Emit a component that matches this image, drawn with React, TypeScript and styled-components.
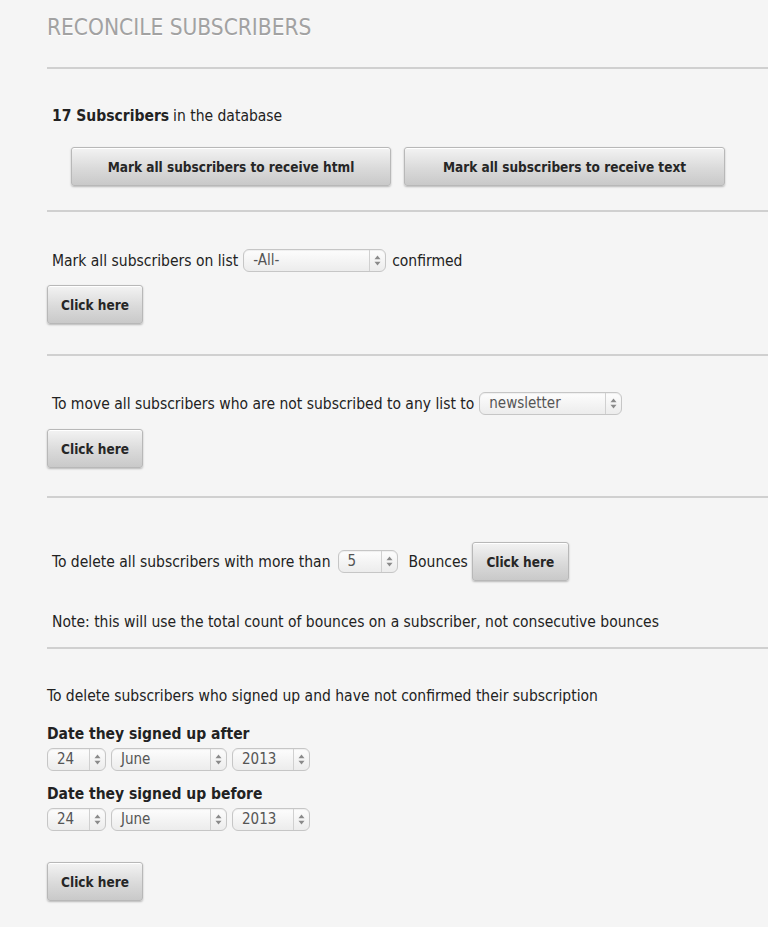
import React from "react";
import styled, { createGlobalStyle } from "styled-components";

const GlobalStyle = createGlobalStyle`
  body {
    margin: 0;
    background: #f5f5f5;
    font-family: "DejaVu Sans Condensed", "DejaVu Sans", sans-serif;
    color: #222;
  }
`;

const Page = styled.div`
  padding-left: 47px;
  min-height: 927px;
`;

const Title = styled.h1`
  margin: 0;
  padding: 14px 0 0;
  height: 69px;
  box-sizing: border-box;
  font-size: 22.5px;
  font-weight: normal;
  line-height: 26px;
  color: #a2a2a2;
  text-shadow: 0 1px 0 #fff;
  border-bottom: 2px solid #d0d0d0;
`;

const Section = styled.div<{ $top: number; $bottom: number }>`
  padding: ${(p) => p.$top}px 0 ${(p) => p.$bottom}px;
  border-bottom: ${(p) => (p.$bottom > 0 ? "2px solid #d0d0d0" : "none")};
`;

const Line = styled.div<{ $indent?: number; $gap?: number }>`
  display: flex;
  align-items: center;
  min-height: 20px;
  padding-left: ${(p) => p.$indent ?? 5}px;
  margin-top: ${(p) => p.$gap ?? 0}px;
  font-size: 15.5px;
  line-height: 20px;
  white-space: nowrap;
`;

const Strong = styled.b`
  font-weight: bold;
  margin-right: 4px;
`;

const Label = styled.div<{ $gap: number }>`
  margin-top: ${(p) => p.$gap}px;
  font-size: 15.5px;
  font-weight: bold;
  line-height: 20px;
`;

const ButtonRow = styled.div`
  display: flex;
  gap: 13px;
  margin-top: 21px;
  padding-left: 24px;
`;

const Button = styled.button<{ $width: number; $gap?: number; $left?: number }>`
  display: block;
  width: ${(p) => p.$width}px;
  height: 39px;
  margin-top: ${(p) => p.$gap ?? 0}px;
  margin-left: ${(p) => p.$left ?? 0}px;
  padding: 0;
  border: 1px solid #b8b8b8;
  border-radius: 3px;
  background: linear-gradient(#f3f3f3, #dadada 55%, #c9c9c9);
  box-shadow: 0 1px 2px rgba(0, 0, 0, 0.25), inset 0 1px 0 #fff;
  font-family: "DejaVu Sans Condensed", "DejaVu Sans", sans-serif;
  font-size: 13.5px;
  font-weight: bold;
  color: #262626;
  cursor: pointer;
`;

const Select = styled.div<{ $width: number; $left?: number; $right?: number }>`
  display: inline-flex;
  box-sizing: border-box;
  width: ${(p) => p.$width}px;
  height: 23px;
  margin-left: ${(p) => p.$left ?? 0}px;
  margin-right: ${(p) => p.$right ?? 0}px;
  border: 1px solid #c6c6c6;
  border-radius: 6px;
  background: linear-gradient(#fdfdfd, #ececec);
  box-shadow: inset 0 1px 1px rgba(0, 0, 0, 0.06);
  font-size: 15px;
  color: #555;
`;

const SelectValue = styled.span`
  flex: 1;
  padding-left: 9px;
  line-height: 21px;
  overflow: hidden;
`;

const SelectArrows = styled.span`
  display: flex;
  align-items: center;
  justify-content: center;
  width: 15px;
  border-left: 1px solid #d0d0d0;
`;

const DateRow = styled.div`
  display: flex;
  gap: 5px;
  margin-top: 4px;
`;

const Arrows = () => (
  <SelectArrows>
    <svg width="7" height="11" viewBox="0 0 7 11">
      <path d="M3.5 0.5 L6.5 4.3 L0.5 4.3 Z" fill="#8a8a8a" />
      <path d="M3.5 10.5 L6.5 6.7 L0.5 6.7 Z" fill="#8a8a8a" />
    </svg>
  </SelectArrows>
);

const FakeSelect = ({
  value,
  width,
  left,
  right,
}: {
  value: string;
  width: number;
  left?: number;
  right?: number;
}) => (
  <Select $width={width} $left={left} $right={right}>
    <SelectValue>{value}</SelectValue>
    <Arrows />
  </Select>
);

const DatePicker = () => (
  <DateRow>
    <FakeSelect value="24" width={59} />
    <FakeSelect value="June" width={116} />
    <FakeSelect value="2013" width={78} />
  </DateRow>
);

export default function App() {
  return (
    <Page>
      <GlobalStyle />
      <Title>RECONCILE SUBSCRIBERS</Title>

      <Section $top={37} $bottom={24}>
        <Line>
          <Strong>17 Subscribers</Strong> in the database
        </Line>
        <ButtonRow>
          <Button $width={320}>Mark all subscribers to receive html</Button>
          <Button $width={321}>Mark all subscribers to receive text</Button>
        </ButtonRow>
      </Section>

      <Section $top={37} $bottom={30}>
        <Line>
          Mark all subscribers on list
          <FakeSelect value="-All-" width={143} left={5} right={6} />
          confirmed
        </Line>
        <Button $width={96} $gap={13}>
          Click here
        </Button>
      </Section>

      <Section $top={36} $bottom={28}>
        <Line>
          To move all subscribers who are not subscribed to any list to
          <FakeSelect value="newsletter" width={143} left={5} />
        </Line>
        <Button $width={96} $gap={14}>
          Click here
        </Button>
      </Section>

      <Section $top={44} $bottom={15}>
        <Line>
          To delete all subscribers with more than
          <FakeSelect value="5" width={60} left={7} right={11} />
          Bounces
          <Button $width={97} $left={4}>
            Click here
          </Button>
        </Line>
        <Line $gap={31}>
          Note: this will use the total count of bounces on a subscriber, not
          consecutive bounces
        </Line>
      </Section>

      <Section $top={37} $bottom={0}>
        <Line $indent={0}>
          To delete subscribers who signed up and have not confirmed their
          subscription
        </Line>
        <Label $gap={18}>Date they signed up after</Label>
        <DatePicker />
        <Label $gap={13}>Date they signed up before</Label>
        <DatePicker />
        <Button $width={96} $gap={31}>
          Click here
        </Button>
      </Section>
    </Page>
  );
}
